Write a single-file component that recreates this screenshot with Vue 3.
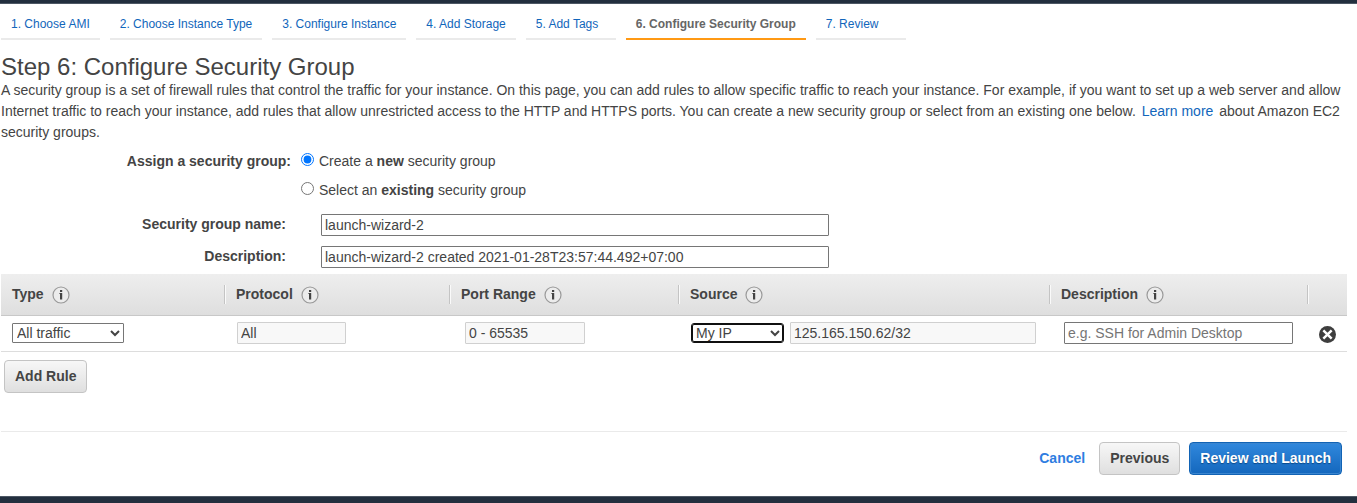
<script setup>
import { ref } from 'vue'

const steps = [
  '1. Choose AMI',
  '2. Choose Instance Type',
  '3. Configure Instance',
  '4. Add Storage',
  '5. Add Tags',
  '6. Configure Security Group',
  '7. Review',
]
const activeStep = 5

const columns = [
  { key: 'type', label: 'Type' },
  { key: 'protocol', label: 'Protocol' },
  { key: 'port', label: 'Port Range' },
  { key: 'source', label: 'Source' },
  { key: 'description', label: 'Description' },
]

const groupMode = ref('new')
const groupName = ref('launch-wizard-2')
const groupDescription = ref('launch-wizard-2 created 2021-01-28T23:57:44.492+07:00')
const rule = ref({
  type: 'All traffic',
  protocol: 'All',
  port: '0 - 65535',
  source: 'My IP',
  cidr: '125.165.150.62/32',
  description: '',
})
</script>

<template>
  <div class="page">
    <header class="bar bar-top"></header>

    <nav class="steps" aria-label="Wizard steps">
      <a
        v-for="(step, i) in steps"
        :key="step"
        href="#"
        class="step"
        :class="{ active: i === activeStep }"
        :aria-current="i === activeStep ? 'step' : undefined"
      >{{ step }}</a>
    </nav>

    <main class="content">
      <h1>Step 6: Configure Security Group</h1>
      <p class="intro">
        A security group is a set of firewall rules that control the traffic for your instance. On this page, you can add rules to allow specific traffic to reach your instance. For example, if you want to set up a web server and allow Internet traffic to reach your instance, add rules that allow unrestricted access to the HTTP and HTTPS ports. You can create a new security group or select from an existing one below.
        <a href="#" class="learn">Learn more</a> about Amazon EC2 security groups.
      </p>

      <form class="group-form" @submit.prevent>
        <div class="choice" role="radiogroup" aria-labelledby="assign-label">
          <span id="assign-label" class="choice-label">Assign a security group:</span>
          <div class="options">
            <label class="option">
              <input v-model="groupMode" type="radio" name="group" value="new" />
              <span>Create a <b>new</b> security group</span>
            </label>
            <label class="option">
              <input v-model="groupMode" type="radio" name="group" value="existing" />
              <span>Select an <b>existing</b> security group</span>
            </label>
          </div>
        </div>
        <div class="field">
          <label for="group-name">Security group name:</label>
          <input id="group-name" v-model="groupName" class="text" type="text" />
        </div>
        <div class="field">
          <label for="group-desc">Description:</label>
          <input id="group-desc" v-model="groupDescription" class="text" type="text" />
        </div>
      </form>

      <table class="rules">
        <colgroup>
          <col class="col-type" />
          <col class="col-protocol" />
          <col class="col-port" />
          <col />
          <col class="col-description" />
          <col class="col-remove" />
        </colgroup>
        <thead>
          <tr>
            <th v-for="col in columns" :key="col.key" scope="col">
              <div class="head">
                <span>{{ col.label }}</span>
                <svg class="info" viewBox="0 0 18 18" aria-hidden="true">
                  <circle cx="9" cy="9" r="8" fill="#ececec" stroke="#999" stroke-width="1.2" />
                  <path d="M8 4h2.2v2H8zM7.4 7h2.8v6.6H8V8h-.6z" fill="#444" />
                </svg>
              </div>
            </th>
            <th><div class="head"></div></th>
          </tr>
        </thead>
        <tbody>
          <tr>
            <td class="cell-type">
              <select v-model="rule.type" aria-label="Type">
                <option>All traffic</option>
              </select>
            </td>
            <td class="cell-protocol">
              <input v-model="rule.protocol" class="text" type="text" aria-label="Protocol" disabled />
            </td>
            <td class="cell-port">
              <input v-model="rule.port" class="text" type="text" aria-label="Port Range" disabled />
            </td>
            <td class="cell-source">
              <div class="source">
                <select v-model="rule.source" class="current" aria-label="Source">
                  <option>My IP</option>
                </select>
                <input v-model="rule.cidr" class="text" type="text" aria-label="Source address" disabled />
              </div>
            </td>
            <td class="cell-description">
              <input
                v-model="rule.description"
                class="text"
                type="text"
                aria-label="Rule description"
                placeholder="e.g. SSH for Admin Desktop"
              />
            </td>
            <td class="cell-remove">
              <button type="button" class="remove" aria-label="Remove rule">
                <svg viewBox="0 0 18 18" aria-hidden="true">
                  <circle cx="9" cy="9" r="9" fill="#3e3e3e" />
                  <path d="M4.6 4.6l8.8 8.8M13.4 4.6l-8.8 8.8" stroke="#fff" stroke-width="2.6" />
                </svg>
              </button>
            </td>
          </tr>
        </tbody>
      </table>

      <button type="button" class="btn add">Add Rule</button>

      <div class="actions">
        <a href="#" class="cancel">Cancel</a>
        <button type="button" class="btn">Previous</button>
        <button type="button" class="btn primary">Review and Launch</button>
      </div>
    </main>

    <footer class="bar bar-bottom"></footer>
  </div>
</template>

<style>
body {
  margin: 0;
  background: #fff;
}
</style>

<style scoped>
.page {
  box-sizing: border-box;
  display: flex;
  flex-direction: column;
  min-height: 100vh;
  font-family: "Liberation Sans", Arial, sans-serif;
  font-size: 14px;
  line-height: 21px;
  color: #444;
}

.bar {
  background: #232f3e;
}

.bar-top {
  height: 3px;
  border-bottom: 1px solid #4d5764;
}

.bar-bottom {
  height: 6px;
  margin-top: auto;
  border-top: 1px solid #4d5764;
}

a {
  color: #1166bb;
  text-decoration: none;
}

.steps {
  display: flex;
  gap: 10px;
  padding: 10px 1px 0;
}

.step {
  box-sizing: border-box;
  min-width: 90px;
  padding: 0 10px 3px;
  border-bottom: 2px solid #eaeaea;
  font-size: 12px;
  white-space: nowrap;
}

.step.active {
  border-color: #ff9914;
  color: #666;
  font-weight: bold;
}

.content {
  padding: 13px 10px 0 1px;
}

h1 {
  margin: 0;
  font-size: 24px;
  font-weight: normal;
  line-height: 27px;
}

.intro {
  margin: 0;
}

.learn {
  margin: 0 2px;
}

.choice {
  display: grid;
  grid-template-columns: 290px 1fr;
  column-gap: 10px;
  margin-top: 8px;
}

.choice-label,
.field label {
  font-weight: bold;
  text-align: right;
}

.options {
  display: flex;
  flex-direction: column;
  align-items: flex-start;
  gap: 8px;
}

.option {
  display: flex;
  align-items: flex-start;
  gap: 5px;
}

.option input {
  width: 13px;
  height: 13px;
  margin: 2px 0 0;
}

.field {
  display: grid;
  grid-template-columns: 285px minmax(0, 508px);
  column-gap: 35px;
  margin-top: 10px;
}

.choice + .field {
  margin-top: 13px;
}

.text,
select {
  box-sizing: border-box;
  width: 100%;
  height: 22px;
  margin: 0;
  padding: 0 3px;
  border: 1px solid #767676;
  border-radius: 1px;
  background: #fff;
  color: #444;
  font: inherit;
}

.text:disabled {
  border-color: #d0d0d0;
  background: #f8f8f8;
}

.text::placeholder {
  color: #757575;
}

select {
  height: 20px;
  padding: 0;
}

select.current {
  border-color: #101010;
  border-radius: 3px;
  outline: 1px solid #101010;
  outline-offset: -2px;
}

.rules {
  width: 100%;
  margin-top: 6px;
  border-collapse: separate;
  border-spacing: 0;
  table-layout: fixed;
}

.col-type {
  width: 223px;
}

.col-protocol {
  width: 225px;
}

.col-port {
  width: 229px;
}

.col-description {
  width: 258px;
}

.col-remove {
  width: 40px;
}

thead tr {
  background: linear-gradient(#eeeeee, #dedede);
}

th {
  height: 41px;
  padding: 0;
  border-bottom: 1px solid #c8c8c8;
  text-align: left;
}

.head {
  display: flex;
  align-items: center;
  gap: 8px;
  height: 19px;
  padding-left: 11px;
  border-left: 1px solid #c4c4c4;
  box-shadow: inset 1px 0 #fafafa;
}

th:first-child .head {
  border-left: 0;
  box-shadow: none;
}

.info {
  flex: none;
  width: 18px;
  height: 18px;
}

td {
  height: 33px;
  padding: 0;
  border-bottom: 1px solid #ddd;
  line-height: 0;
}

tbody td {
  padding-bottom: 2px;
}

.cell-type {
  padding-right: 100px;
  padding-left: 11px;
}

.cell-protocol {
  padding-right: 103px;
  padding-left: 13px;
}

.cell-port {
  padding-right: 93px;
  padding-left: 16px;
}

.cell-source {
  padding-right: 13px;
  padding-left: 13px;
}

.cell-description {
  padding-right: 14px;
  padding-left: 15px;
}

.source {
  display: flex;
  align-items: center;
  gap: 6px;
}

.source select {
  flex: none;
  width: 93px;
}

.remove {
  display: block;
  width: 17px;
  height: 17px;
  margin: 3px 0 0 12px;
  padding: 0;
  border: 0;
  background: none;
}

.remove svg {
  display: block;
}

.btn {
  box-sizing: border-box;
  height: 33px;
  padding: 0 10px;
  border: 1px solid #c4c4c4;
  border-radius: 4px;
  background: linear-gradient(#f7f7f7, #dfdfdf);
  color: #444;
  font: inherit;
  font-weight: bold;
}

.btn.primary {
  border-color: #1163b5;
  background: linear-gradient(#3088dd, #1467bd);
  box-shadow: inset 0 0 0 1px #3a85cf;
  color: #fff;
  text-shadow: 0 1px 1px #0a4a8a;
}

.add {
  display: block;
  margin: 8px 0 0 3px;
}

.actions {
  display: flex;
  align-items: center;
  justify-content: flex-end;
  margin-top: 38px;
  padding: 10px 5px 21px;
  border-top: 1px solid #eaeaea;
}

.cancel {
  margin-right: 14px;
  color: #2e7de1;
  font-weight: bold;
}

.actions .primary {
  margin-left: 9px;
}
</style>
